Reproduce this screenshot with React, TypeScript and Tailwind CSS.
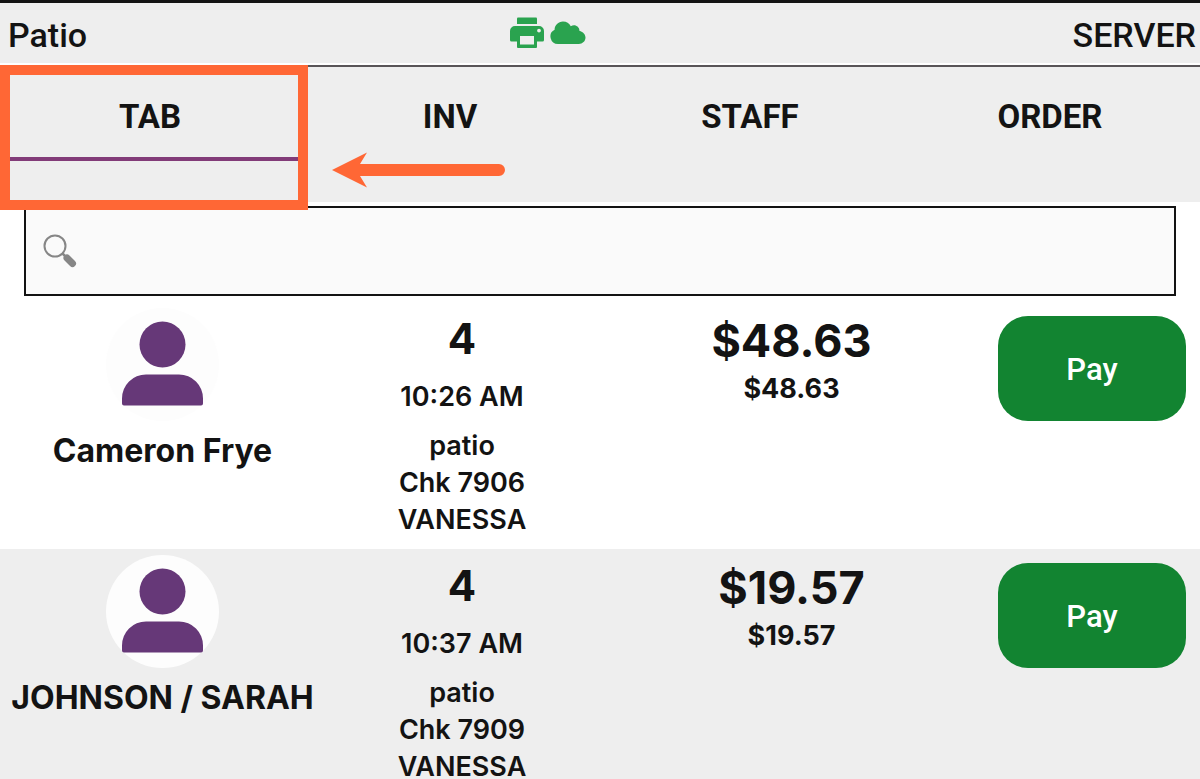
import { useState } from "react";
import clsx from "clsx";

type Check = {
    name: string;
    guests: number;
    time: string;
    area: string;
    check: string;
    server: string;
    total: string;
    due: string;
}

const tabs = ["TAB", "INV", "STAFF", "ORDER"];

const checks: Check[] = [
    {
        name: "Cameron Frye",
        guests: 4,
        time: "10:26 AM",
        area: "patio",
        check: "Chk 7906",
        server: "VANESSA",
        total: "$48.63",
        due: "$48.63",
    },
    {
        name: "JOHNSON / SARAH",
        guests: 4,
        time: "10:37 AM",
        area: "patio",
        check: "Chk 7909",
        server: "VANESSA",
        total: "$19.57",
        due: "$19.57",
    },
];

function PrinterIcon() {
    return (
        <svg className="w-[34px] h-[32px]" viewBox="0 0 34 32" fill="#2aa34f" role="img" aria-label="Printer online">
            <path d="M8 .5h18a1 1 0 0 1 1 1V7H7V1.500a1 1 0 0 1 1-1z" />
            <path fillRule="evenodd" d="M5 9h24a5 5 0 0 1 5 5v9a1.500 1.500 0 0 1-1.500 1.500H27V30a1 1 0 0 1-1 1H8a1 1 0 0 1-1-1v-5.500H1.500A1.500 1.500 0 0 1 0 23v-9a5 5 0 0 1 5-5zM10 19v8.500h14V19zM29 11.700a1.900 1.900 0 1 0 0 3.800 1.900 1.900 0 0 0 0-3.800z" />
        </svg>
    )
}

function CloudIcon() {
    return (
        <svg className="w-[36px] h-[24px]" viewBox="0 0 36 24" fill="#2aa34f" role="img" aria-label="Cloud connected">
            <path d="M8 23a7.500 7.500 0 0 1-3.400-14.200C4.600 4.200 8.300.5 13 .5c3.600 0 6.300 1.900 7.800 4.700 3.900-2.400 8.700.2 8.700 4.700 3.600.7 6 3.500 6 6.700 0 3.700-3 6.400-6.700 6.400z" />
        </svg>
    )
}

function SearchIcon() {
    return (
        <svg className="w-[34px] h-[34px] shrink-0" viewBox="0 0 34 34" fill="none" stroke="#868686" aria-hidden="true">
            <circle cx="12" cy="12" r="10.500" strokeWidth="2" />
            <path d="M19 19l5 5" strokeWidth="2.500" />
            <path d="M24 24l5.500 5.500" strokeWidth="7" strokeLinecap="round" />
        </svg>
    )
}

function Avatar() {
    return (
        <svg className="w-[113px] h-[113px]" viewBox="0 0 113 113" aria-hidden="true">
            <circle cx="56.500" cy="56.500" r="56.500" fill="#fdfdfd" />
            <circle cx="56.500" cy="36.500" r="23" fill="#663878" />
            <path d="M40 66.500h33A24 24 0 0 1 97 90.500V95.500q0 2-2 2H18q-2 0-2-2V90.500A24 24 0 0 1 40 66.500z" fill="#663878" />
        </svg>
    )
}

function Highlight() {
    return (
        <>
            <span className="absolute -top-0.5 left-0 -right-2 h-[145px] border-[10px] border-[#ff6735] z-10 pointer-events-none" />
            <svg className="absolute left-full top-[85px] ml-8 w-[173px] h-[36px] pointer-events-none" viewBox="0 0 173 36" fill="#ff6735" aria-hidden="true">
                <path d="M0 18L35 .5L28 12H167A6 6 0 0 1 167 24H28L35 35.500z" />
            </svg>
        </>
    )
}

function CheckRow({ item }: { item: Check }) {
    return (
        <li className="grid grid-cols-[325fr_274fr_385fr_216fr] h-[247px] shrink-0 even:bg-[#eeeeee] text-center font-semibold">
            <div className="flex flex-col items-center pt-1.5">
                <Avatar />
                <h2 className="mt-2.5 text-[32px] leading-[40px] font-bold whitespace-nowrap">{item.name}</h2>
            </div>
            <div className="pt-3.5">
                <p className="text-[42px] leading-[46px] font-bold">{item.guests}</p>
                <p className="mt-4 text-[27px] leading-[37px]">{item.time}</p>
                <p className="mt-3 text-[27px] leading-[37px]">{item.area}</p>
                <p className="text-[27px] leading-[37px]">{item.check}</p>
                <p className="text-[27px] leading-[37px]">{item.server}</p>
            </div>
            <div className="pt-3.5">
                <p className="text-[45px] leading-[50px] font-bold">{item.total}</p>
                <p className="mt-1 text-[27px] leading-[37px] font-bold">{item.due}</p>
            </div>
            <div className="pt-3.5 px-3.5">
                <button type="button" className="w-full h-[105px] pt-1 rounded-[30px] bg-[#128431] text-white text-[31px] font-medium font-['Roboto',sans-serif] cursor-pointer">
                    Pay
                </button>
            </div>
        </li>
    )
}

export default function App() {
    const [active, setActive] = useState("TAB");
    const [query, setQuery] = useState("");

    const shown = checks.filter((c) => c.name.toLowerCase().includes(query.toLowerCase()));

    return (
        <div className="flex flex-col h-screen bg-white text-[#131313] font-['Inter',sans-serif]">
            <header className="border-t-3 border-[#131313] font-['Roboto',sans-serif]">
                <div className="grid grid-cols-[502fr_auto_610fr] items-center h-[60px] pl-2 pr-1 bg-[#eeeeee] text-[34px] leading-[40px] font-medium">
                    <span className="pt-1">Patio</span>
                    <div className="flex items-center gap-1.5">
                        <PrinterIcon />
                        <CloudIcon />
                    </div>
                    <span className="pt-1 text-right">SERVER</span>
                </div>
            </header>
            <nav className="mt-0.5 border-t-2 border-[#595558] font-['Roboto',sans-serif]">
                <ul className="grid grid-cols-4 h-[135px] bg-[#eeeeee]">
                    {tabs.map((tab) => (
                        <li key={tab} className="relative">
                            <button
                                type="button"
                                onClick={() => setActive(tab)}
                                className={clsx(
                                    "w-full h-[94px] pt-2.5 border-b-4 text-[33px] leading-[40px] font-bold cursor-pointer",
                                    active === tab ? "border-[#823b78]" : "border-transparent"
                                )}
                            >
                                {tab}
                            </button>
                            {tab === "TAB" && <Highlight />}
                        </li>
                    ))}
                </ul>
            </nav>
            <label className="flex items-center gap-3 shrink-0 h-[90px] mt-1 mx-6 px-[17px] border-2 border-[#131313] bg-[#fafafa]">
                <SearchIcon />
                <input
                    type="search"
                    aria-label="Search tabs"
                    value={query}
                    onChange={(e) => setQuery(e.target.value)}
                    className="w-full h-full bg-transparent text-[30px] outline-none"
                />
            </label>
            <ul className="flex flex-col flex-1 min-h-0 mt-1.5 overflow-y-auto [scrollbar-width:none]">
                {shown.map((item) => (
                    <CheckRow key={item.check} item={item} />
                ))}
            </ul>
        </div>
    )
}
